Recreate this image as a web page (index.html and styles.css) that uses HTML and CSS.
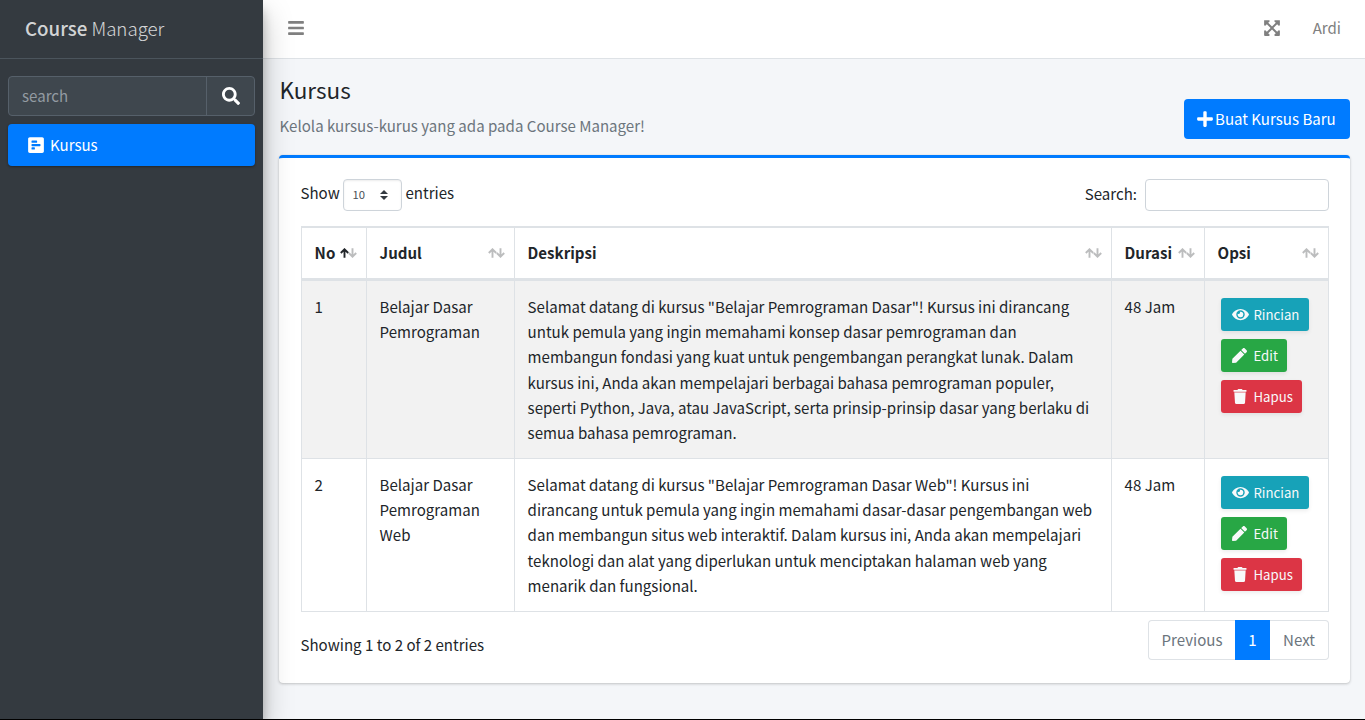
FILE: index.html
```html
<!DOCTYPE html>
<html lang="id">
<head>
<meta charset="utf-8">
<title>Course Manager</title>
<link rel="stylesheet" href="styles.css">
</head>
<body>
<svg class="defs" width="0" height="0">
  <symbol id="eye" viewBox="0 0 576 512"><path d="M572.52 241.4C518.29 135.59 410.93 64 288 64S57.68 135.64 3.48 241.41a32.35 32.35 0 0 0 0 29.19C57.71 376.41 165.07 448 288 448s230.32-71.64 284.52-177.41a32.35 32.35 0 0 0 0-29.19zM288 400a144 144 0 1 1 144-144 143.93 143.93 0 0 1-144 144zm0-240a95.31 95.31 0 0 0-25.31 3.79 47.85 47.85 0 0 1-66.9 66.9A95.78 95.78 0 1 0 288 160z"/></symbol>
  <symbol id="pen" viewBox="0 0 512 512"><path d="M290.74 93.24l128.02 128.02-277.99 277.99-114.14 12.6C11.35 513.54-1.56 500.62.14 485.34l12.7-114.22 277.9-277.88zm207.2-19.06l-60.11-60.11c-18.75-18.75-49.16-18.75-67.91 0l-56.55 56.55 128.02 128.02 56.55-56.55c18.75-18.76 18.75-49.16 0-67.91z"/></symbol>
  <symbol id="trash" viewBox="0 0 448 512"><path d="M432 32H312l-9.400-18.700A24 24 0 0 0 281.100 0H166.800a23.720 23.720 0 0 0-21.400 13.300L136 32H16A16 16 0 0 0 0 48v32a16 16 0 0 0 16 16h416a16 16 0 0 0 16-16V48a16 16 0 0 0-16-16z"/><path d="M53.200 467a48 48 0 0 0 47.900 45h245.800a48 48 0 0 0 47.900-45L416 128H32z"/><path opacity=".5" d="M30 90h388v44H30z"/></symbol>
  <symbol id="up" viewBox="0 0 9 10"><path d="M4.500 9.800V1.500M.8 5L4.500 1.300L8.200 5" fill="none" stroke="currentColor" stroke-width="1.900"/></symbol>
  <symbol id="down" viewBox="0 0 9 10"><path d="M4.500 .2V8.500M.8 5L4.500 8.700L8.200 5" fill="none" stroke="currentColor" stroke-width="1.900"/></symbol>
</svg>
<div class="app">
  <aside class="sidebar">
    <div class="brand"><span class="brand-strong">Course</span> <span class="brand-light">Manager</span></div>
    <div class="side-search">
      <span class="side-input">search</span>
      <span class="side-btn"><svg width="18" height="18" viewBox="0 0 512 512"><path d="M505 442.7L405.300 343c-4.500-4.500-10.600-7-17-7H372c27.600-35.300 44-79.700 44-128C416 93.100 322.900 0 208 0S0 93.100 0 208s93.100 208 208 208c48.300 0 92.700-16.400 128-44v16.300c0 6.400 2.500 12.500 7 17l99.700 99.700c9.400 9.400 24.600 9.400 33.900 0l28.300-28.300c9.400-9.400 9.400-24.600.1-34zM208 336c-70.700 0-128-57.200-128-128 0-70.700 57.200-128 128-128 70.700 0 128 57.200 128 128 0 70.700-57.200 128-128 128z"/></svg></span>
    </div>
    <div class="nav-item"><svg width="16" height="18" viewBox="0 0 448 512"><path d="M448 432V80c0-26.500-21.500-48-48-48H48C21.500 32 0 53.500 0 80v352c0 26.500 21.500 48 48 48h352c26.500 0 48-21.500 48-48zM112 192c-8.840 0-16-7.160-16-16v-32c0-8.840 7.160-16 16-16h128c8.840 0 16 7.160 16 16v32c0 8.840-7.160 16-16 16H112zm0 96c-8.840 0-16-7.160-16-16v-32c0-8.840 7.160-16 16-16h224c8.840 0 16 7.160 16 16v32c0 8.840-7.160 16-16 16H112zm0 96c-8.840 0-16-7.160-16-16v-32c0-8.840 7.160-16 16-16h64c8.840 0 16 7.160 16 16v32c0 8.840-7.160 16-16 16h-64z"/></svg><span class="nav-label">Kursus</span></div>
  </aside>
  <div class="main">
    <header class="topbar">
      <svg class="bars" width="16" height="18" viewBox="0 0 448 512"><path d="M16 132h416c8.837 0 16-7.163 16-16V76c0-8.837-7.163-16-16-16H16C7.163 60 0 67.163 0 76v40c0 8.837 7.163 16 16 16zm0 160h416c8.837 0 16-7.163 16-16v-40c0-8.837-7.163-16-16-16H16c-8.837 0-16 7.163-16 16v40c0 8.837 7.163 16 16 16zm0 160h416c8.837 0 16-7.163 16-16v-40c0-8.837-7.163-16-16-16H16c-8.837 0-16 7.163-16 16v40c0 8.837 7.163 16 16 16z"/></svg>
      <svg class="expand" width="16" height="18" viewBox="0 0 448 512"><path d="M448 344v112a23.940 23.940 0 0 1-24 24H312c-21.390 0-32.090-25.900-17-41l36.200-36.200L224 295.600 116.770 402.900 153 439c15.090 15.100 4.390 41-17 41H24a23.940 23.940 0 0 1-24-24V344c0-21.400 25.890-32.100 41-17l36.190 36.200L184.460 256 77.180 148.700 41 185c-15.100 15.100-41 4.400-41-17V56a23.940 23.940 0 0 1 24-24h112c21.390 0 32.090 25.900 17 41l-36.200 36.200L224 216.400l107.230-107.300L295 73c-15.090-15.100-4.390-41 17-41h112a23.940 23.940 0 0 1 24 24v112c0 21.400-25.890 32.100-41 17l-36.190-36.200L263.540 256l107.280 107.300L407 327.100c15.100-15.200 41-4.500 41 16.900z"/></svg>
      <span class="user">Ardi</span>
    </header>
    <main class="content">
      <div class="page-head">
        <div>
          <h1>Kursus</h1>
          <p class="lead">Kelola kursus-kurus yang ada pada Course Manager!</p>
        </div>
        <div class="create"><svg width="16" height="18" viewBox="0 0 448 512"><path d="M416 208H272V64c0-17.670-14.330-32-32-32h-32c-17.670 0-32 14.330-32 32v144H32c-17.670 0-32 14.330-32 32v32c0 17.670 14.330 32 32 32h144v144c0 17.670 14.330 32 32 32h32c17.670 0 32-14.330 32-32V304h144c17.670 0 32-14.330 32-32v-32c0-17.670-14.330-32-32-32z"/></svg><span class="create-label">Buat Kursus Baru</span></div>
      </div>
      <section class="card">
        <div class="tools">
          <div class="length"><span class="show">Show</span><span class="select">10<svg width="8" height="10" viewBox="0 0 8 10"><path d="M0 4L4 0L8 4ZM0 6H8L4 10Z"/></svg></span><span class="entries">entries</span></div>
          <div class="filter"><span class="filter-label">Search:</span><span class="filter-input"></span></div>
        </div>
        <table>
          <colgroup><col class="c1"><col class="c2"><col class="c3"><col class="c4"><col class="c5"></colgroup>
          <thead><tr>
            <th><div class="th"><span>No</span><span class="sort asc"><svg><use href="#up"/></svg><svg><use href="#down"/></svg></span></div></th>
            <th><div class="th"><span>Judul</span><span class="sort"><svg><use href="#up"/></svg><svg><use href="#down"/></svg></span></div></th>
            <th><div class="th"><span>Deskripsi</span><span class="sort"><svg><use href="#up"/></svg><svg><use href="#down"/></svg></span></div></th>
            <th><div class="th"><span>Durasi</span><span class="sort"><svg><use href="#up"/></svg><svg><use href="#down"/></svg></span></div></th>
            <th><div class="th"><span>Opsi</span><span class="sort"><svg><use href="#up"/></svg><svg><use href="#down"/></svg></span></div></th>
          </tr></thead>
          <tbody>
            <tr class="odd">
              <td>1</td>
              <td>Belajar Dasar<br>Pemrograman</td>
              <td>Selamat datang di kursus "Belajar Pemrograman Dasar"! Kursus ini dirancang<br>untuk pemula yang ingin memahami konsep dasar pemrograman dan<br>membangun fondasi yang kuat untuk pengembangan perangkat lunak. Dalam<br>kursus ini, Anda akan mempelajari berbagai bahasa pemrograman populer,<br>seperti Python, Java, atau JavaScript, serta prinsip-prinsip dasar yang berlaku di<br>semua bahasa pemrograman.</td>
              <td>48 Jam</td>
              <td><div class="actions"><span class="btn info"><svg class="i-eye"><use href="#eye"/></svg>Rincian</span><span class="btn success"><svg class="i-pen"><use href="#pen"/></svg>Edit</span><span class="btn danger"><svg class="i-trash"><use href="#trash"/></svg>Hapus</span></div></td>
            </tr>
            <tr class="even">
              <td>2</td>
              <td>Belajar Dasar<br>Pemrograman<br>Web</td>
              <td>Selamat datang di kursus "Belajar Pemrograman Dasar Web"! Kursus ini<br>dirancang untuk pemula yang ingin memahami dasar-dasar pengembangan web<br>dan membangun situs web interaktif. Dalam kursus ini, Anda akan mempelajari<br>teknologi dan alat yang diperlukan untuk menciptakan halaman web yang<br>menarik dan fungsional.</td>
              <td>48 Jam</td>
              <td><div class="actions"><span class="btn info"><svg class="i-eye"><use href="#eye"/></svg>Rincian</span><span class="btn success"><svg class="i-pen"><use href="#pen"/></svg>Edit</span><span class="btn danger"><svg class="i-trash"><use href="#trash"/></svg>Hapus</span></div></td>
            </tr>
          </tbody>
        </table>
        <div class="foot">
          <span class="info-text">Showing 1 to 2 of 2 entries</span>
          <div class="pager"><span class="pg prev">Previous</span><span class="pg current">1</span><span class="pg next">Next</span></div>
        </div>
      </section>
    </main>
  </div>
</div>
</body>
</html>
```
FILE: styles.css
```css
* { box-sizing: border-box; }
body {
  margin: 0;
  font-family: "Noto Sans CJK SC", "Noto Sans", sans-serif;
  font-size: 15.07px;
  line-height: 25.2px;
  color: #212529;
  background: #f4f6f9;
  white-space: nowrap;
}
svg { display: block; fill: currentColor; flex: none; }
.defs { position: absolute; }
.app { display: flex; height: 720px; overflow: hidden; border-bottom: 1px solid #000; }

.sidebar {
  position: relative;
  z-index: 2;
  flex: none;
  width: 263px;
  background: #343a40;
  box-shadow: 0 14px 28px rgba(0,0,0,.25), 0 10px 10px rgba(0,0,0,.22);
}
.brand {
  height: 59px;
  padding: 13px 0 0 25px;
  border-bottom: 1px solid #4b545c;
  color: rgba(255,255,255,.8);
  font-size: 18.7px;
  line-height: 30px;
}
.brand-strong { font-weight: 500; }
.brand-light { font-weight: 300; }
.side-search {
  display: flex;
  height: 40px;
  margin: 17px 8px 8px;
  border: 1px solid #56606a;
  border-radius: 4px;
  background: #3f474e;
}
.side-input { flex: 1; padding: 6px 13px; color: #939ba2; }
.side-btn {
  display: flex;
  align-items: center;
  justify-content: center;
  width: 48px;
  border-left: 1px solid #56606a;
  color: #fff;
}
.nav-item {
  display: flex;
  align-items: center;
  gap: 6px;
  height: 42px;
  margin: 0 8px;
  padding-left: 20px;
  border-radius: 4px;
  background: #007bff;
  color: #fff;
  box-shadow: 0 1px 3px rgba(0,0,0,.12), 0 1px 2px rgba(0,0,0,.24);
}

.main { flex: 1; min-width: 0; }
.topbar {
  display: flex;
  align-items: center;
  height: 59px;
  padding: 0 24px 3px 25px;
  border-bottom: 1px solid #dee2e6;
  background: #fff;
  color: #808080;
}
.expand { margin-left: auto; }
.user { margin-left: 33px; }
.content { padding: 0 15px 0 16px; }
.page-head { display: flex; justify-content: space-between; height: 96px; padding-left: .5px; }
h1 { margin: 15px 0 0; font-size: 22.5px; font-weight: 400; line-height: 30px; }
.lead { margin: 9px 0 0; color: #6c757d; }
.create {
  display: flex;
  align-items: center;
  gap: 2px;
  width: 166px;
  height: 40px;
  margin-top: 40px;
  padding-left: 13px;
  border-radius: 4px;
  background: #007bff;
  color: #fff;
}
.card {
  height: 528px;
  padding: 21px 21px 0 22px;
  border-top: 3px solid #007bff;
  border-radius: 4px;
  background: #fff;
  box-shadow: 0 0 1px rgba(0,0,0,.125), 0 1px 3px rgba(0,0,0,.2);
}
.tools { display: flex; justify-content: space-between; height: 47px; }
.length, .filter { display: flex; height: 32px; }
.show, .entries { padding-top: 1px; }
.show { width: 42px; margin-left: -.5px; }
.select {
  display: flex;
  align-items: center;
  justify-content: space-between;
  width: 59px;
  margin-right: 4px;
  padding: 0 13px 0 9px;
  border: 1px solid #ced4da;
  border-radius: 4px;
  color: #495057;
  font-size: 11.3px;
  box-shadow: inset 0 1px 2px rgba(0,0,0,.075);
}
.select svg { color: #343a40; }
.filter-label { padding-top: 2px; }
.filter-input { width: 184px; margin-left: 8px; border: 1px solid #ced4da; border-radius: 4px; }

table {
  width: 1028px;
  table-layout: fixed;
  border-collapse: separate;
  border-spacing: 0;
  border-left: 1px solid #dee2e6;
  border-top: 1px solid #dee2e6;
}
.c1 { width: 65px; }
.c2 { width: 148px; }
.c3 { width: 597px; }
.c4 { width: 93px; }
.c5 { width: 124px; }
th, td { border-right: 1px solid #dee2e6; border-bottom: 1px solid #dee2e6; text-align: left; vertical-align: top; }
th { height: 54px; padding: 0 9px 0 12.6px; border-top: 1px solid #dee2e6; border-bottom-width: 3px; vertical-align: middle; }
td { padding: 13px 0 0 12.6px; }
.odd td { height: 178px; background: #f2f2f2; }
.even td { height: 153px; }
.th { display: flex; align-items: center; justify-content: space-between; }
.sort { display: flex; color: #bcbdbe; }
.sort svg { width: 9px; height: 10px; }
.sort svg + svg { margin-left: -.5px; }
.asc svg:first-child { color: #212529; }
.actions { display: flex; flex-direction: column; align-items: flex-start; gap: 8px; padding: 4px 0 0 3.4px; }
.btn {
  display: flex;
  align-items: center;
  height: 33px;
  padding: 0 9px 0 11px;
  border-radius: 3px;
  color: #f8f9fa;
  font-size: 13.2px;
  box-shadow: 0 2px 4px rgba(0,0,0,.075);
}
.info { width: 88px; background: #17a2b8; }
.success { width: 66px; background: #28a745; }
.danger { width: 81px; background: #dc3545; }
.i-eye { width: 17px; height: 15px; margin-right: 4.500px; }
.i-pen { width: 15px; height: 15px; margin-right: 6.500px; }
.i-trash { width: 14px; height: 15px; margin: 0 6.500px 1px 1px; }

.foot { display: flex; justify-content: space-between; padding-top: 8px; }
.info-text { margin-left: -.5px; padding-top: 12px; }
.pager { display: flex; height: 40px; color: #6c757d; }
.pg { padding: 6px 0; border: 1px solid #dee2e6; text-align: center; }
.prev { width: 87px; border-right: 0; border-radius: 4px 0 0 4px; }
.current { width: 35px; border-color: #007bff; background: #007bff; color: #fff; }
.next { width: 59px; border-left: 0; border-radius: 0 4px 4px 0; }
```
